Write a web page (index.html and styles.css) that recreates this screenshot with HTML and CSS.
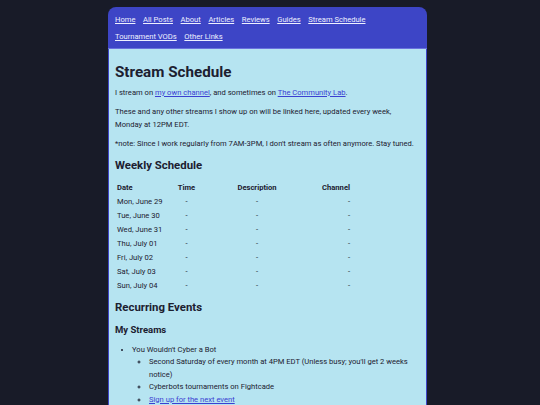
FILE: index.html
```html
<!DOCTYPE html>
<html lang="en">
<head>
<meta charset="utf-8">
<title>Stream Schedule</title>
<link rel="stylesheet" href="styles.css">
</head>
<body>
<div class="page">
  <nav class="nav">
    <a href="#">Home</a>
    <a href="#">All Posts</a>
    <a href="#">About</a>
    <a href="#">Articles</a>
    <a href="#">Reviews</a>
    <a href="#">Guides</a>
    <a href="#">Stream Schedule</a>
    <a href="#">Tournament VODs</a>
    <a href="#">Other Links</a>
  </nav>
  <main class="content">
    <h1 class="title">Stream Schedule</h1>
    <p class="para">I stream on <a href="#">my own channel</a>, and sometimes on <a href="#">The Community Lab</a>.</p>
    <p class="para">These and any other streams I show up on will be linked here, updated every week, Monday at 12PM EDT.</p>
    <p class="para">*note: Since I work regularly from 7AM-3PM, I don't stream as often anymore. Stay tuned.</p>
    <h2 class="section">Weekly Schedule</h2>
    <table class="schedule">
      <colgroup>
        <col class="c-date"><col class="c-time"><col class="c-desc"><col class="c-chan">
      </colgroup>
      <thead>
        <tr><th class="left">Date</th><th>Time</th><th>Description</th><th class="right">Channel</th></tr>
      </thead>
      <tbody>
        <tr><td class="left">Mon, June 29</td><td>-</td><td>-</td><td class="right">-</td></tr>
        <tr><td class="left">Tue, June 30</td><td>-</td><td>-</td><td class="right">-</td></tr>
        <tr><td class="left">Wed, June 31</td><td>-</td><td>-</td><td class="right">-</td></tr>
        <tr><td class="left">Thu, July 01</td><td>-</td><td>-</td><td class="right">-</td></tr>
        <tr><td class="left">Fri, July 02</td><td>-</td><td>-</td><td class="right">-</td></tr>
        <tr><td class="left">Sat, July 03</td><td>-</td><td>-</td><td class="right">-</td></tr>
        <tr><td class="left">Sun, July 04</td><td>-</td><td>-</td><td class="right">-</td></tr>
      </tbody>
    </table>
    <h2 class="section recurring">Recurring Events</h2>
    <h3 class="sub">My Streams</h3>
    <ul class="list">
      <li>You Wouldn't Cyber a Bot
        <ul class="sublist">
          <li>Second Saturday of every month at 4PM EDT (Unless busy; you'll get 2 weeks notice)</li>
          <li>Cyberbots tournaments on Fightcade</li>
          <li><a href="#">Sign up for the next event</a></li>
        </ul>
      </li>
    </ul>
  </main>
</div>
</body>
</html>
```

FILE: styles.css
```css
html, body {
  margin: 0;
  padding: 0;
}
body {
  background: #181b28;
  font-family: Roboto, "Liberation Sans", sans-serif;
  color: #1c2030;
  font-size: 7.6px;
}
.page {
  width: 319px;
  margin: 7px 0 0 108px;
  border-radius: 8px 8px 0 0;
  overflow: hidden;
  background: #3d45c6;
}
.nav {
  display: flex;
  flex-wrap: wrap;
  column-gap: 7.6px;
  padding: 3.5px 7px;
  line-height: 17px;
  font-size: 7.6px;
  border-bottom: 1px solid #6a72dd;
}
.nav a {
  color: #eef0ff;
}
.content {
  background: #b6e4f1;
  margin: 0 1px;
  padding: 13px 7px 0 6px;
  min-height: 360px;
}
.content a {
  color: #3b40d2;
}
.title {
  font-size: 15.2px;
  font-weight: 700;
  line-height: 20px;
  margin: 0;
}
.para {
  margin: 3.5px 0 6px;
  line-height: 13px;
}
.section {
  font-size: 11.4px;
  line-height: 16px;
  font-weight: 700;
  margin: 7px 0 8px;
}
.schedule {
  border-collapse: collapse;
  table-layout: fixed;
  width: 237px;
}
.c-date { width: 52px; }
.c-time { width: 39px; }
.c-desc { width: 102px; }
.c-chan { width: 44px; }
.schedule th, .schedule td {
  height: 14px;
  padding: 0 2px;
  line-height: 14px;
  text-align: center;
  white-space: nowrap;
}
.schedule th {
  font-weight: 700;
}
.schedule .left { text-align: left; }
.schedule .right { text-align: right; }
.recurring {
  margin-top: 6px;
}
.sub {
  font-size: 9.5px;
  line-height: 14px;
  font-weight: 700;
  margin: 5px 0 7px;
}
.list {
  margin: 0;
  padding-left: 17px;
  line-height: 12.5px;
}
.sublist {
  margin: 0;
  padding-left: 17px;
  list-style-type: circle;
}
```
